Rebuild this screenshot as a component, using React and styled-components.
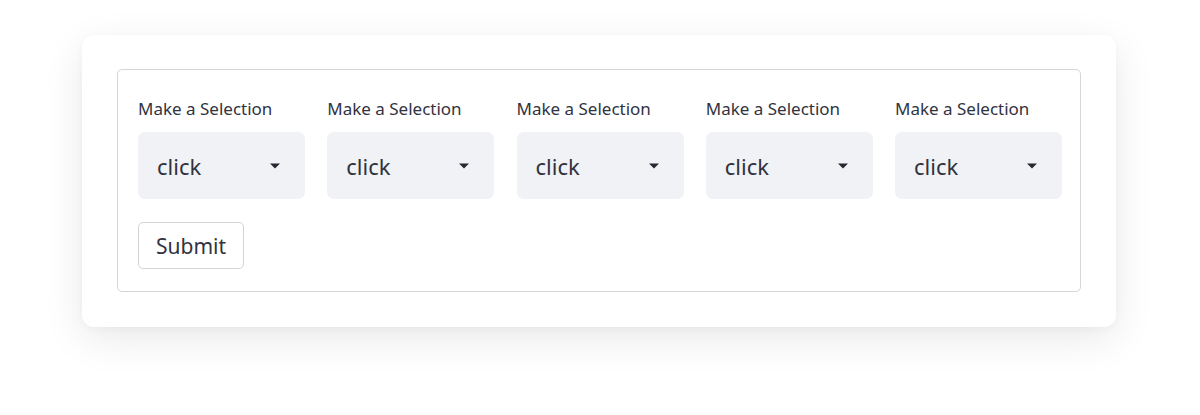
import React from "react";
import styled, { createGlobalStyle } from "styled-components";

const Global = createGlobalStyle`
  html, body { margin: 0; padding: 0; background: #ffffff; }
  body { font-family: "Noto Sans", "Open Sans", sans-serif; color: #31333f; }
`;

const Page = styled.div`
  width: 1200px;
  height: 415px;
  padding: 35px 84px 0 82px;
  box-sizing: border-box;
`;

const Card = styled.div`
  background: #ffffff;
  border-radius: 12px;
  box-shadow: 0 12px 40px rgba(0, 0, 0, 0.09), 0 2px 10px rgba(0, 0, 0, 0.03);
  padding: 34px 35px 35px 35px;
`;

const Form = styled.form`
  border: 1px solid #d5d6da;
  border-radius: 5px;
  padding: 28px 18px 22px 20px;
  display: flex;
  flex-direction: column;
  gap: 23px;
`;

const Row = styled.div`
  display: grid;
  grid-template-columns: repeat(5, 1fr);
  column-gap: 22.25px;
`;

const Field = styled.div`
  display: flex;
  flex-direction: column;
  gap: 12px;
`;

const Label = styled.label`
  font-size: 17px;
  line-height: 22px;
  color: #31333f;
`;

const Select = styled.div`
  height: 67px;
  background: #f0f2f6;
  border-radius: 7px;
  display: flex;
  align-items: center;
  justify-content: space-between;
  padding: 0 25px 0 19px;
  box-sizing: border-box;
  font-size: 22px;
  color: #31333f;
`;

const Caret = styled.svg`
  width: 10px;
  height: 6px;
  display: block;
`;

const Button = styled.button`
  align-self: flex-start;
  width: 106px;
  height: 47px;
  background: #ffffff;
  border: 1px solid #d3d4d9;
  border-radius: 5px;
  font-family: inherit;
  font-size: 21px;
  color: #31333f;
  padding: 0;
  cursor: pointer;
`;

export default function App() {
  return (
    <>
      <Global />
      <Page>
        <Card>
          <Form onSubmit={(e) => e.preventDefault()}>
            <Row>
              {[0, 1, 2, 3, 4].map((i) => (
                <Field key={i}>
                  <Label>Make a Selection</Label>
                  <Select>
                    <span>click</span>
                    <Caret viewBox="0 0 10 6">
                      <path d="M0 0.5 H10 L5 5.5 Z" fill="#262730" />
                    </Caret>
                  </Select>
                </Field>
              ))}
            </Row>
            <Button type="submit">Submit</Button>
          </Form>
        </Card>
      </Page>
    </>
  );
}
